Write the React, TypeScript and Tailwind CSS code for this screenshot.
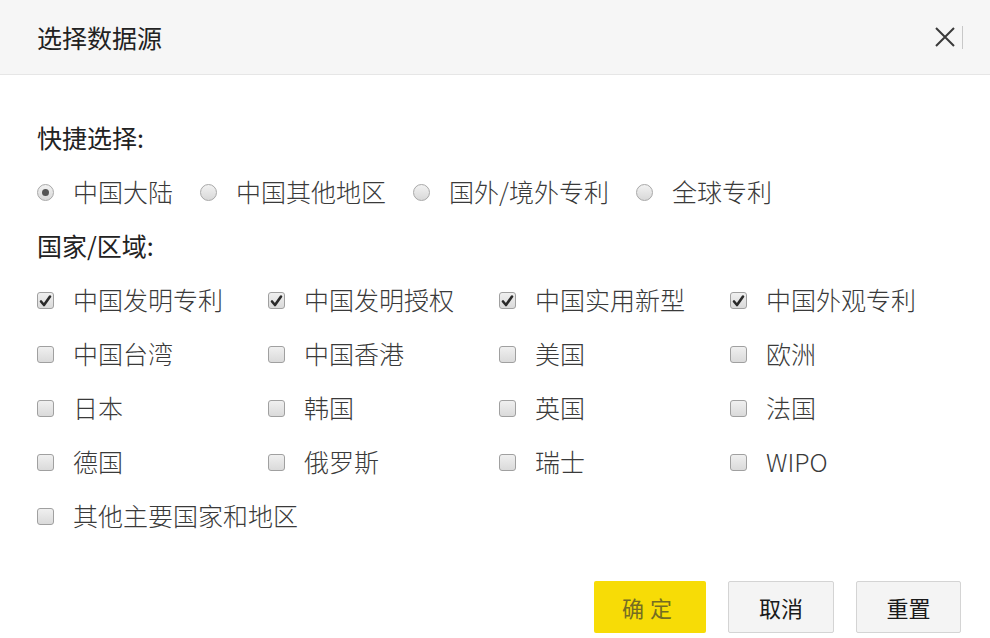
import React from "react";

const font = { fontFamily: '"Noto Sans CJK SC", "Noto Sans", sans-serif' };

function Radio({ checked }: { checked?: boolean }) {
  return (
    <span className="flex h-[17px] w-[17px] shrink-0 items-center justify-center rounded-full border border-[#a8a8a8] bg-gradient-to-b from-[#f2f2f2] to-[#d8d8d8]">
      {checked && <span className="h-[7px] w-[7px] rounded-full bg-[#555]" />}
    </span>
  );
}

function Check({ checked }: { checked?: boolean }) {
  return (
    <span className="flex h-[17px] w-[17px] shrink-0 items-center justify-center rounded-[3px] border border-[#a0a0a0] bg-gradient-to-b from-[#f0f0f0] to-[#dadada]">
      {checked && (
        <svg width="13" height="13" viewBox="0 0 13 13">
          <path d="M2 7.5 L5 11 L11 2.5" fill="none" stroke="#2a2a2a" strokeWidth="2.6" strokeLinecap="round" strokeLinejoin="round" />
        </svg>
      )}
    </span>
  );
}

const rows: [string, boolean][][] = [
  [["中国发明专利", true], ["中国发明授权", true], ["中国实用新型", true], ["中国外观专利", true]],
  [["中国台湾", false], ["中国香港", false], ["美国", false], ["欧洲", false]],
  [["日本", false], ["韩国", false], ["英国", false], ["法国", false]],
  [["德国", false], ["俄罗斯", false], ["瑞士", false], ["WIPO", false]],
  [["其他主要国家和地区", false]],
];

export default function App() {
  return (
    <div className="flex h-[638px] w-[990px] flex-col bg-white text-[#333]" style={font}>
      <div className="flex h-[75px] shrink-0 items-center justify-between border-b border-[#e6e6e6] bg-[#f6f6f6] pl-[37px] pr-[27px]">
        <span className="text-[25px] leading-none text-[#222]">选择数据源</span>
        <div className="flex items-center gap-[6px]">
          <svg width="22" height="22" viewBox="0 0 22 22">
            <path d="M2 2 L20 20 M20 2 L2 20" stroke="#3a3a3a" strokeWidth="2" />
          </svg>
          <span className="h-[23px] w-px bg-[#c8c8c8]" />
        </div>
      </div>
      <div className="flex flex-col pl-[37px] pt-[36px]">
        <div className="flex h-[54px] items-center text-[25px] text-[#222]">快捷选择:</div>
        <div className="flex h-[54px] items-center text-[25px] font-light text-[#3a3a3a]">
          {[
            ["中国大陆", true],
            ["中国其他地区", false],
            ["国外/境外专利", false],
            ["全球专利", false],
          ].map(([t, c], i) => (
            <div key={i} className="mr-[27px] flex items-center gap-[19px]">
              <Radio checked={c as boolean} />
              <span>{t as string}</span>
            </div>
          ))}
        </div>
        <div className="flex h-[54px] items-center text-[25px] text-[#222]">国家/区域:</div>
        {rows.map((r, ri) => (
          <div key={ri} className="flex h-[54px] items-center text-[25px] font-light text-[#3a3a3a]">
            {r.map(([t, c], i) => (
              <div key={i} className="flex w-[231px] items-center gap-[19px]">
                <Check checked={c} />
                <span className="whitespace-nowrap">{t}</span>
              </div>
            ))}
          </div>
        ))}
      </div>
      <div className="mt-[38px] flex justify-end gap-[22px] pr-[29px]">
        <button className="flex h-[52px] w-[112px] items-center justify-center rounded-[2px] bg-[#f7dc06] text-[22px] tracking-[6px] text-[#756d22]" style={font}>
          确定
        </button>
        <button className="flex h-[52px] w-[106px] items-center justify-center rounded-[2px] border border-[#d4d4d4] bg-[#f4f4f4] text-[22px] text-[#1a1a1a]" style={font}>
          取消
        </button>
        <button className="flex h-[52px] w-[105px] items-center justify-center rounded-[2px] border border-[#d4d4d4] bg-[#f4f4f4] text-[22px] text-[#1a1a1a]" style={font}>
          重置
        </button>
      </div>
    </div>
  );
}
